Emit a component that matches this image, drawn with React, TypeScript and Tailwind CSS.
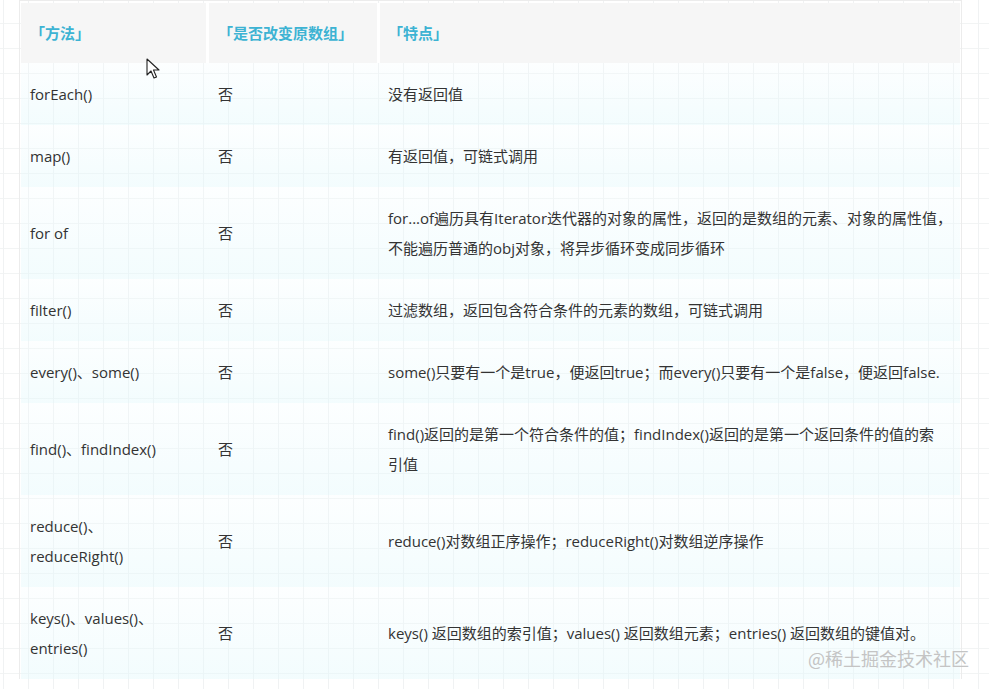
const rows: { method: string[]; mutates: string; note: string[] }[] = [
  { method: ["forEach()"], mutates: "否", note: ["没有返回值"] },
  { method: ["map()"], mutates: "否", note: ["有返回值，可链式调用"] },
  {
    method: ["for of"],
    mutates: "否",
    note: [
      "for...of遍历具有Iterator迭代器的对象的属性，返回的是数组的元素、对象的属性值，",
      "不能遍历普通的obj对象，将异步循环变成同步循环",
    ],
  },
  { method: ["filter()"], mutates: "否", note: ["过滤数组，返回包含符合条件的元素的数组，可链式调用"] },
  {
    method: ["every()、some()"],
    mutates: "否",
    note: ["some()只要有一个是true，便返回true；而every()只要有一个是false，便返回false."],
  },
  {
    method: ["find()、findIndex()"],
    mutates: "否",
    note: ["find()返回的是第一个符合条件的值；findIndex()返回的是第一个返回条件的值的索", "引值"],
  },
  {
    method: ["reduce()、", "reduceRight()"],
    mutates: "否",
    note: ["reduce()对数组正序操作；reduceRight()对数组逆序操作"],
  },
  {
    method: ["keys()、values()、", "entries()"],
    mutates: "否",
    note: ["keys() 返回数组的索引值；values() 返回数组元素；entries() 返回数组的键值对。"],
  },
];

function Lines({ lines }: { lines: string[] }) {
  return (
    <>
      {lines.map((line, i) => (
        <div key={i} className="whitespace-nowrap">
          {line}
        </div>
      ))}
    </>
  );
}

function Cursor() {
  return (
    <svg
      className="pointer-events-none absolute left-[146px] top-[58px]"
      width="14"
      height="22"
      viewBox="0 0 14 22"
    >
      <path
        d="M1 1 L1 17 L5 13 L8 20 L10.5 19 L7.5 12 L13 12 Z"
        fill="#fff"
        stroke="#222"
        strokeWidth="1.1"
        strokeLinejoin="round"
      />
    </svg>
  );
}

export default function App() {
  return (
    <div
      className="relative h-[689px] w-[989px] overflow-hidden bg-white bg-[linear-gradient(to_right,#f0f2f3_1px,transparent_1px),linear-gradient(to_bottom,#f2f4f4_1px,transparent_1px)] bg-[size:25px_25px] bg-[position:3px_-2px] text-[15px] text-[#333] [font-family:'Open_Sans','Noto_Sans_CJK_SC',sans-serif]"
    >
      <div className="ml-[19px] w-[943px] border-x border-t border-[#ececec] px-[1px] pt-[2px]">
        <div className="grid grid-cols-[185px_168px_1fr] gap-x-[3px] bg-white">
          <div className="flex h-[60px] items-center bg-[#f6f6f6] pl-[9px] font-bold text-[#3db3d3]">「方法」</div>
          <div className="flex h-[60px] items-center bg-[#f6f6f6] pl-[9px] font-bold text-[#3db3d3]">「是否改变原数组」</div>
          <div className="flex h-[60px] items-center bg-[#f6f6f6] pl-[8px] font-bold text-[#3db3d3]">「特点」</div>
        </div>
        {rows.map((row, i) => (
          <div
            key={i}
            className="grid grid-cols-[185px_168px_1fr] gap-x-[3px] bg-[linear-gradient(to_bottom,rgba(245,253,255,0.25),rgba(228,249,252,0.45))] py-[16px] leading-[30px]"
          >
            <div className="flex flex-col justify-center pl-[9px]">
              <Lines lines={row.method} />
            </div>
            <div className="flex flex-col justify-center pl-[9px]">{row.mutates}</div>
            <div className="flex flex-col justify-center pl-[8px]">
              <Lines lines={row.note} />
            </div>
          </div>
        ))}
      </div>
      <Cursor />
      <div className="absolute left-[808px] top-[645px] text-[18px] text-[#c4c4c4] [font-family:'Noto_Sans_CJK_SC',sans-serif]">
        @稀土掘金技术社区
      </div>
    </div>
  );
}
